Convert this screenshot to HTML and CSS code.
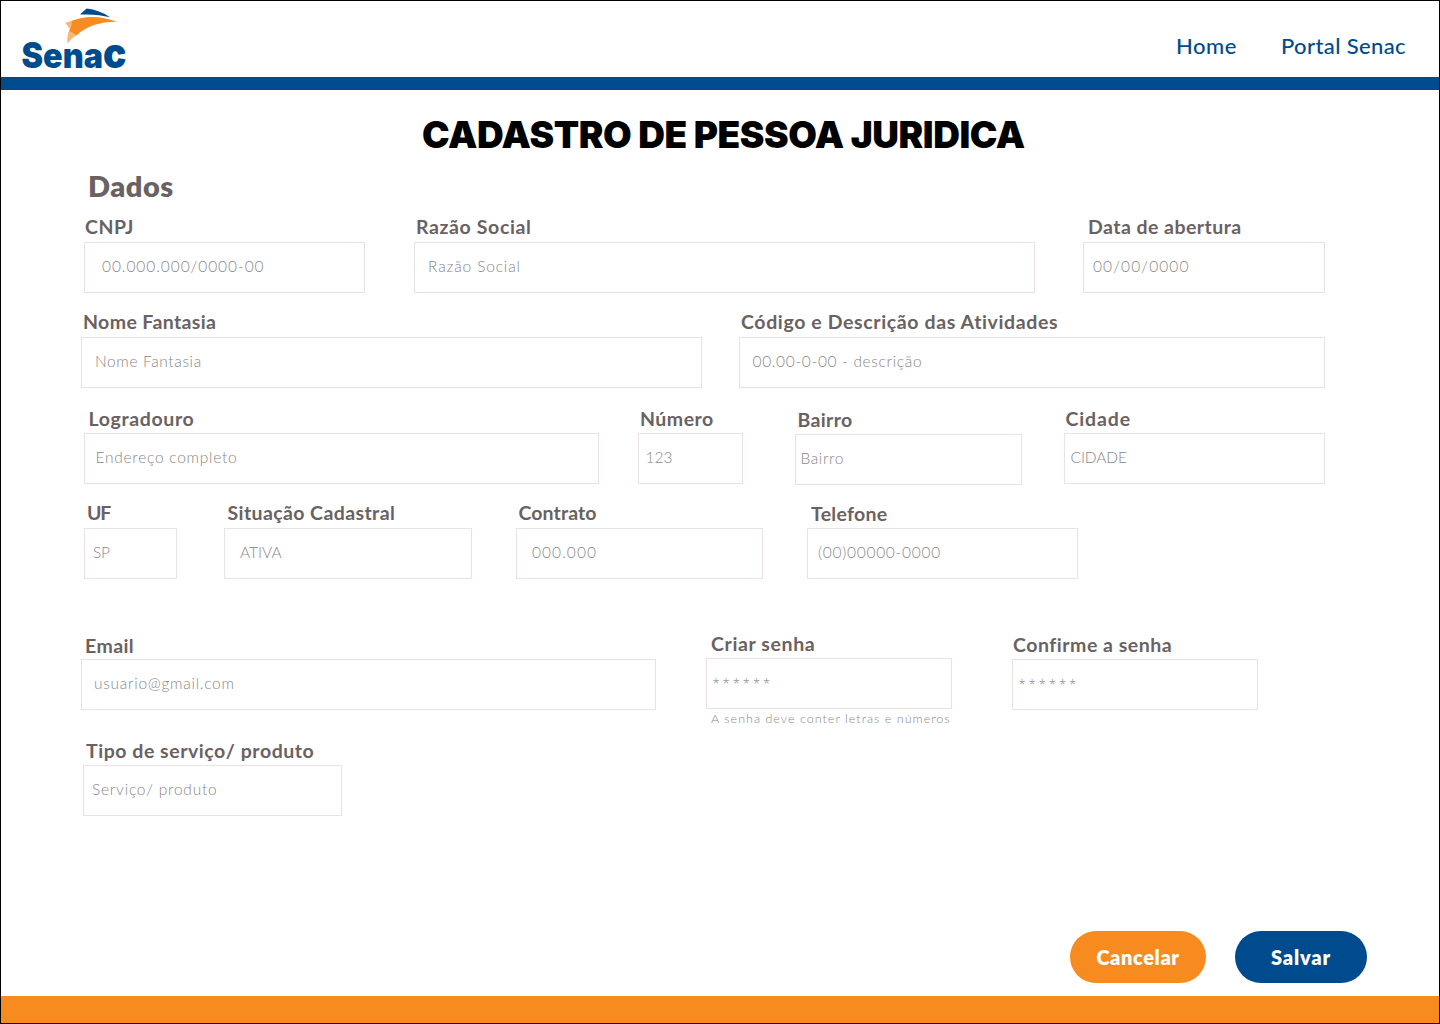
FILE: index.html
```html
<!DOCTYPE html>
<html lang="pt-BR">
<head>
  <meta charset="utf-8">
  <title>Cadastro de Pessoa Juridica</title>
  <link rel="stylesheet" href="styles.css">
</head>
<body>
  <div class="page">
    <header class="header">
      <svg class="logo" width="110" height="66" viewBox="20 6 110 66" role="img" aria-label="Senac">
        <path fill="#004b8d" d="M80 14.6 86.6 8.6Q99.5 10 110 17.3 97 13.6 80 14.6Z"/>
        <path fill="#fbb778" d="M65.2 22.8 73.5 20.2 79 33.5Q72 37.5 67.4 43.4 66.8 33 70.2 29.3Z"/>
        <path fill="#f78b1f" d="M71.8 21Q92 12.500 117 21.800 92 21.500 76.500 35.200L69 30.400Q72.500 26 71.800 21Z"/>
        <text class="logo-text" x="21.5" y="68.200" textLength="105" lengthAdjust="spacingAndGlyphs">Sena<tspan class="logo-c">c</tspan></text>
      </svg>
      <nav class="nav">
        <a class="nav-home">Home</a>
        <a class="nav-portal">Portal Senac</a>
      </nav>
    </header>

    <main class="main">
      <h1 class="title">CADASTRO DE PESSOA JURIDICA</h1>
      <h2 class="section">Dados</h2>

      <div class="row row-1">
        <div class="field cnpj"><span class="label">CNPJ</span><div class="input">00.000.000/0000-00</div></div>
        <div class="field razao"><span class="label">Razão Social</span><div class="input">Razão Social</div></div>
        <div class="field abertura"><span class="label">Data de abertura</span><div class="input">00/00/0000</div></div>
      </div>

      <div class="row row-2">
        <div class="field fantasia"><span class="label">Nome Fantasia</span><div class="input">Nome Fantasia</div></div>
        <div class="field atividades"><span class="label">Código e Descrição das Atividades</span><div class="input">00.00-0-00 - descrição</div></div>
      </div>

      <div class="row row-3">
        <div class="field logradouro"><span class="label">Logradouro</span><div class="input">Endereço completo</div></div>
        <div class="field numero"><span class="label">Número</span><div class="input">123</div></div>
        <div class="field bairro"><span class="label">Bairro</span><div class="input">Bairro</div></div>
        <div class="field cidade"><span class="label">Cidade</span><div class="input">CIDADE</div></div>
      </div>

      <div class="row row-4">
        <div class="field uf"><span class="label">UF</span><div class="input">SP</div></div>
        <div class="field situacao"><span class="label">Situação Cadastral</span><div class="input">ATIVA</div></div>
        <div class="field contrato"><span class="label">Contrato</span><div class="input">000.000</div></div>
        <div class="field telefone"><span class="label">Telefone</span><div class="input">(00)00000-0000</div></div>
      </div>

      <div class="row row-5">
        <div class="field email"><span class="label">Email</span><div class="input">usuario@gmail.com</div></div>
        <div class="field senha"><span class="label">Criar senha</span><div class="input">******</div><p class="hint">A senha deve conter letras e números</p></div>
        <div class="field confirma"><span class="label">Confirme a senha</span><div class="input">******</div></div>
      </div>

      <div class="row row-6">
        <div class="field tipo"><span class="label">Tipo de serviço/ produto</span><div class="input">Serviço/ produto</div></div>
      </div>

      <div class="actions">
        <button class="btn btn-cancel" type="button">Cancelar</button>
        <button class="btn btn-save" type="button">Salvar</button>
      </div>
    </main>

    <footer class="footer"></footer>
  </div>
</body>
</html>
```
FILE: styles.css
```css
* { box-sizing: border-box; }

body {
  margin: 0;
  font-family: Lato, "Open Sans", sans-serif;
}

.page {
  display: flex;
  flex-direction: column;
  width: 1440px;
  height: 1024px;
  border: 1px solid #000;
  background: #fff;
}

/* Header */
.header {
  display: flex;
  justify-content: space-between;
  height: 89px;
  padding: 5px 33px 0 19px;
  border-bottom: 13px solid #004b8d;
}
.logo { display: block; overflow: visible; }
.logo-text {
  font-family: Inter, sans-serif;
  font-size: 35px;
  font-weight: 900;
  fill: #004b8d;
}
.logo-c { font-size: 42px; }
.nav {
  display: flex;
  gap: 44px;
  padding-top: 27px;
  font-size: 22px;
  font-weight: 500;
  line-height: 26px;
  color: #004b8d;
}
.nav-home { letter-spacing: 0.5px; }
.nav-portal { letter-spacing: 0.38px; }

/* Form */
.main {
  display: flex;
  flex: 1;
  flex-direction: column;
}
.title {
  height: 72px;
  margin: 0;
  padding: 22px 0 0 421px;
  font: 900 37px/45px Inter, sans-serif;
  letter-spacing: -0.42px;
  white-space: nowrap;
}
.section {
  height: 54px;
  margin: 0;
  padding: 6px 0 0 87px;
  font-size: 29px;
  font-weight: 800;
  line-height: 36px;
  letter-spacing: 0.5px;
  color: #6a6262;
}
.row {
  display: flex;
  align-items: flex-start;
  height: 77px;
}
.row-1 { margin-bottom: 18px; padding-left: 83px; }
.row-2 { margin-bottom: 19px; padding-left: 80px; }
.row-3 { margin-bottom: 18px; padding-left: 83px; }
.row-4 { margin-bottom: 54px; padding-left: 83px; }
.row-5 { margin-bottom: 29px; padding-left: 80px; }
.row-6 { padding-left: 82px; }

.label {
  display: block;
  height: 26px;
  font-size: 19.5px;
  font-weight: 700;
  line-height: 21px;
  white-space: nowrap;
  color: #6a6262;
}
.row-3 .label, .row-6 .label, .telefone .label,
.senha .label, .confirma .label { padding-top: 1px; }
.email .label { padding-top: 2px; }

.input {
  height: 51px;
  border: 1px solid #ece0e2;
  font-size: 15.5px;
  font-weight: 300;
  line-height: 47px;
  white-space: nowrap;
  color: #8a8787;
}

.cnpj { width: 281px; margin-right: 49px; }
.cnpj .label { padding-left: 1px; letter-spacing: 0.5px; }
.cnpj .input { padding-left: 17px; letter-spacing: 0.94px; }

.razao { width: 621px; margin-right: 48px; }
.razao .label { padding-left: 2px; letter-spacing: 0.62px; }
.razao .input { padding-left: 13px; letter-spacing: 0.85px; }

.abertura { width: 242px; }
.abertura .label { padding-left: 5px; letter-spacing: 0.45px; }
.abertura .input { padding-left: 9px; letter-spacing: 1.12px; }

.fantasia { width: 621px; margin-right: 37px; }
.fantasia .label { padding-left: 2px; letter-spacing: 0.38px; }
.fantasia .input { padding-left: 13px; letter-spacing: 0.62px; }

.atividades { width: 586px; }
.atividades .label { padding-left: 2px; letter-spacing: 0.62px; }
.atividades .input { padding-left: 12.5px; letter-spacing: 0.67px; }

.logradouro { width: 515px; margin-right: 39px; }
.logradouro .label { padding-left: 4.5px; letter-spacing: 0.63px; }
.logradouro .input { padding-left: 10.5px; letter-spacing: 0.75px; }

.numero { width: 105px; margin-right: 52px; }
.numero .label { padding-left: 2px; letter-spacing: 0.49px; }
.numero .input { padding-left: 6.5px; }

.bairro { width: 227px; margin: 1px 42px 0 0; }
.bairro .label { padding-left: 2.5px; letter-spacing: 0.34px; }
.bairro .input { padding-left: 4.5px; letter-spacing: 0.6px; }

.cidade { width: 261px; }
.cidade .label { padding-left: 1.5px; letter-spacing: 0.85px; }
.cidade .input { padding-left: 5.5px; letter-spacing: -0.1px; }

.uf { width: 93px; margin-right: 47px; }
.uf .label { padding-left: 3px; letter-spacing: -1.3px; }
.uf .input { padding-left: 8px; letter-spacing: -0.4px; }

.situacao { width: 248px; margin-right: 44px; }
.situacao .label { padding-left: 3.5px; letter-spacing: 0.4px; }
.situacao .input { padding-left: 15px; }

.contrato { width: 247px; margin-right: 44px; }
.contrato .label { padding-left: 2.5px; letter-spacing: 0.1px; }
.contrato .input { padding-left: 15px; letter-spacing: 1.07px; }

.telefone { width: 271px; }
.telefone .label { padding-left: 4px; letter-spacing: 0.28px; }
.telefone .input { padding-left: 10px; letter-spacing: 0.74px; }

.email { width: 575px; margin-right: 50px; }
.email .label { padding-left: 4px; letter-spacing: 0.4px; }
.email .input { padding-left: 12px; letter-spacing: 0.73px; }

.senha { width: 246px; margin: -1px 60px 0 0; }
.senha .label { padding-left: 5px; letter-spacing: 0.62px; }

.confirma { width: 246px; }
.confirma .label { padding-left: 1px; letter-spacing: 0.52px; }

.senha .input, .confirma .input {
  padding-left: 5.5px;
  font-family: "Open Sans", sans-serif;
  font-size: 13px;
  letter-spacing: 2.95px;
  line-height: 48px;
}

.tipo { width: 259px; }
.tipo .label { padding-left: 3px; letter-spacing: 0.54px; }
.tipo .input { padding-left: 8px; letter-spacing: 0.78px; }

.hint {
  margin: 0;
  padding: 2px 0 0 5px;
  font-size: 12.5px;
  font-weight: 300;
  line-height: 16px;
  letter-spacing: 1.03px;
  white-space: nowrap;
  color: #8a8787;
}

/* Buttons */
.actions {
  display: flex;
  gap: 29px;
  justify-content: flex-end;
  margin-top: auto;
  padding: 0 72px 13px 0;
}
.btn {
  height: 52px;
  padding: 0 0 1px;
  border: 0;
  border-radius: 26px;
  font: 800 20px/24px Lato, sans-serif;
  color: #fff;
}
.btn-cancel { width: 136px; background: #f78b1f; letter-spacing: 0.6px; }
.btn-save { width: 132px; background: #004b8d; letter-spacing: 0.8px; }

.footer { height: 27px; background: #f78b1f; }
```
